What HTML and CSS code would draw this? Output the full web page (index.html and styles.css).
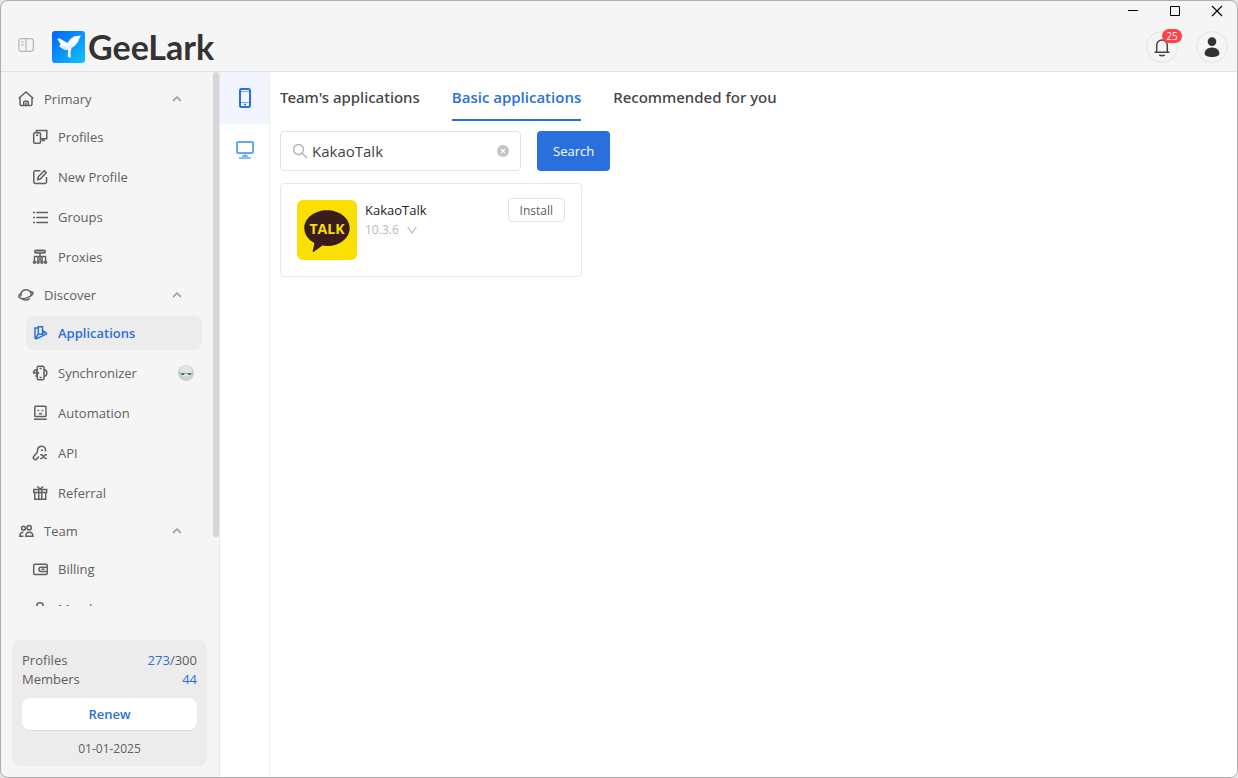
FILE: index.html
```html
<!DOCTYPE html>
<html lang="en">
<head>
<meta charset="utf-8">
<title>GeeLark</title>
<link rel="stylesheet" href="styles.css">
</head>
<body>
<div class="window">
  <header class="header">
    <div class="titlebar">
      <button class="win-btn" aria-label="Minimize"><svg width="12" height="12" viewBox="0 0 12 12"><path d="M1 5.5h10" stroke="#000"/></svg></button>
      <button class="win-btn" aria-label="Maximize"><svg width="12" height="12" viewBox="0 0 12 12"><path d="M1.5 1.5h9v9h-9z" stroke="#000" fill="none"/></svg></button>
      <button class="win-btn" aria-label="Close"><svg width="12" height="12" viewBox="0 0 12 12"><path d="M1 1l10 10M11 1L1 11" stroke="#000" stroke-width="1.1"/></svg></button>
    </div>
    <div class="topbar">
      <button class="collapse" aria-label="Toggle sidebar"><svg width="16" height="16" viewBox="0 0 16 16" fill="none" stroke="#b9b9b9" stroke-width="1.3"><rect x=".8" y="1.7" width="14.6" height="12.6" rx="2.6"/><path d="M8 1.7v12.6M3.2 5h2.2M3.2 8h2.2"/></svg></button>
      <div class="brand">
        <svg width="33" height="32" viewBox="0 0 33 32"><defs><linearGradient id="logo-bg" x1="0" y1="0" x2="1" y2="1"><stop offset="0" stop-color="#0062ff"/><stop offset="1" stop-color="#12c4ff"/></linearGradient></defs><rect width="33" height="32" rx="3" fill="url(#logo-bg)"/><path d="M5 8.500L7 7l2.500 1.500L15.500 12l3-4L22 5.500l7-1L27.500 7l-1.500 4-3 3.500-3.500 2.500-1 4.500.2 5.500-3-1.500.5-6.500-4.700-.8L7.500 15.500l1-2.500L6 9z" fill="#fff"/><path d="M7.500 15.500l4 2.700 4.700.8-1.200-4.500z" fill="#dcecff"/><path d="M15.500 12l.7 7 3.300-2 3.500-2.500z" fill="#e6f2ff"/></svg>
        <span class="brand-name">GeeLark</span>
      </div>
      <div class="top-actions">
        <button class="round" aria-label="Notifications"><svg width="18" height="20" viewBox="0 0 18 20" fill="none" stroke="#444" stroke-width="1.5"><path d="M3.700 15V8.200a5.300 5.300 0 0 1 10.600 0V15M1.500 15.200h15M6.300 18q2.700 1.400 5.400 0"/></svg><span class="badge">25</span></button>
        <button class="round" aria-label="Account"><svg width="18" height="20" viewBox="0 0 18 20" fill="#333"><circle cx="9" cy="4.600" r="4.300"/><path d="M9 10.500c4.500 0 7.400 2.800 7.400 6 0 2.200-3 3.500-7.400 3.500s-7.400-1.300-7.400-3.500c0-3.200 2.900-6 7.400-6z"/></svg></button>
      </div>
    </div>
  </header>
  <div class="body">
    <aside class="sidebar">
      <nav class="nav">
        <button class="group"><svg class="ico" viewBox="0 0 16 16"><path d="M2 6.300L8 1l6 5.300v6.700a1.500 1.500 0 0 1-1.500 1.500h-9A1.500 1.500 0 0 1 2 13zM.8 7.400L2 6.300M15.200 7.400L14 6.300M5.700 14.500v-3.300a1 1 0 0 1 1-1h2.600a1 1 0 0 1 1 1v3.300M8 11.500v3"/></svg><span>Primary</span><svg class="chev" viewBox="0 0 10 8"><path d="M1 6l4-4 4 4"/></svg></button>
        <a class="item" href="#"><svg class="ico" viewBox="0 0 16 16"><path d="M4.500 3.500V1.500h10.300v8.300H9M10.500 9.800v1.700h2.500"/><rect x="1.700" y="3.700" width="6.800" height="10.600" rx="1.200"/><path d="M4 6.200h2.200"/></svg><span>Profiles</span></a>
        <a class="item" href="#"><svg class="ico" viewBox="0 0 16 16"><path d="M8.500 1.800H3.200a1.400 1.400 0 0 0-1.400 1.400v9.900a1.400 1.400 0 0 0 1.400 1.400h9.900a1.400 1.400 0 0 0 1.400-1.400V8M5.800 10.600l.4-2.800 6-6 2 2-6 6.200z"/></svg><span>New Profile</span></a>
        <a class="item" href="#"><svg class="ico" viewBox="0 0 16 16"><path d="M4.300 3.500H16M4.300 8.500H16M4.300 13.500H16M1 3.500h2M1 8.500h2M1 13.500h2"/></svg><span>Groups</span></a>
        <a class="item" href="#"><svg class="ico" viewBox="0 0 16 16"><rect x="2.800" y="1.200" width="10.400" height="2.800" rx="1" fill="#aaa"/><path d="M8 4v8M2.500 12V7.500h11V12M6 7.500V12M10 7.500V12"/><circle cx="2.400" cy="13.200" r="1"/><circle cx="6.100" cy="13.200" r="1"/><circle cx="9.900" cy="13.200" r="1"/><circle cx="13.600" cy="13.200" r="1"/></svg><span>Proxies</span></a>

        <button class="group"><svg class="ico" viewBox="0 0 16 16"><path d="M3 9.500C2 5.500 4.500 2.800 8 2.800s5.800 2.400 5.200 6M4.300 12c2 1.600 5.500 1.500 7.500-.5"/><path d="M3.200 6.200C1.200 7.500.4 9.200 1.200 10.200c1.300 1.700 5.300 1.700 9 .2 3.500-1.400 5.500-3.900 4.700-5-.4-.6-1.400-.8-2.600-.7"/></svg><span>Discover</span><svg class="chev" viewBox="0 0 10 8"><path d="M1 6l4-4 4 4"/></svg></button>
        <a class="item active" href="#" aria-current="page"><svg class="ico" viewBox="0 0 16 16"><path d="M6.300 3H3v9.800a1 1 0 0 0 1.400.9l9.800-4.500a.8.800 0 0 0 0-1.400L10.500 5.500"/><path d="M6.300 1.800h4.200v7.400H6.300zM10.500 9.200l2-2.300M3.500 13.500l2.800-4.300"/></svg><span>Applications</span></a>
        <a class="item" href="#"><svg class="ico" viewBox="0 0 16 16"><rect x="5.200" y="1.200" width="6.800" height="13.600" rx="1.200"/><path d="M7.500 3.500h2.200M7.500 12.500h2.200M5.200 4.700C3 4.700 1.500 6 1.500 8h5M4.500 6l2 2-2 2M3.300 10.800l2 .5M12 11.300c1.900 0 2.800-1.300 2.800-3.300S13.900 4.700 12 4.700"/></svg><span>Synchronizer</span><svg class="bot" viewBox="0 0 16 16"><circle cx="8" cy="8" r="8" fill="#d0d0d0"/><circle cx="8" cy="6" r="5.800" fill="#e2e2e2"/><path d="M1 8.500h14" stroke="#999" stroke-width=".8"/><path d="M3 8.300h3.800l-1 1.700h-2zM9.500 8.300h4l-1 1.700h-2z" fill="#17864a"/></svg></a>
        <a class="item" href="#"><svg class="ico" viewBox="0 0 16 16"><rect x="2.800" y="1.200" width="11.200" height="10.300" rx=".8"/><path d="M2 14.300h12.800M5.500 5.500h1.600M9.700 5.500h1.600M6.800 8.800h3.400"/></svg><span>Automation</span></a>
        <a class="item" href="#"><svg class="ico" viewBox="0 0 16 16"><path d="M13.500 6.500V5a4 4 0 0 0-7.900-.6c-.2 1.500 0 2.500-.7 3.400l-3 3.400a2 2 0 0 0 2.900 2.800l2-2.400M9 5.200h2"/><path d="M9.500 9.500l4 4M13.500 9.500l-4 4M9 9v1.500M14.200 9v1.500M9 14.200V13M14.200 14.200V13"/></svg><span>API</span></a>
        <a class="item" href="#"><svg class="ico" viewBox="0 0 16 16"><path d="M1.800 4.500h12.900v3H1.800zM2.800 7.500v6.800h10.900V7.500M6.700 4.500v9.800M9.800 4.500v9.800M5.200 1.500L8.200 4l3-2.500"/></svg><span>Referral</span></a>

        <button class="group"><svg class="ico" viewBox="0 0 16 16"><circle cx="5.500" cy="5.200" r="1.900"/><circle cx="11.200" cy="4.700" r="2.200"/><path d="M5.500 9.300c-2.400 0-3.700 1.500-3.700 4h3.700M7.800 13.300c0-2.600 1.200-4 3.500-4s3.600 1.400 3.600 4z"/></svg><span>Team</span><svg class="chev" viewBox="0 0 10 8"><path d="M1 6l4-4 4 4"/></svg></button>
        <a class="item" href="#"><svg class="ico" viewBox="0 0 16 16"><rect x="1.700" y="3.200" width="13.500" height="10.300" rx="1"/><path d="M15.200 6.200H9a2.100 2.100 0 0 0 0 4.200h6.200M9.500 8.300h3"/></svg><span>Billing</span></a>
        <a class="item" href="#"><svg class="ico" viewBox="0 0 16 16"><circle cx="8" cy="5" r="3.200"/><path d="M2 14.500c0-3.500 2.500-5 6-5s6 1.500 6 5"/></svg><span>Members</span></a>
      </nav>
      <div class="thumb"></div>
      <section class="quota">
        <div class="quota-row"><span>Profiles</span><span><b>273</b>/300</span></div>
        <div class="quota-row"><span>Members</span><span><b>44</b></span></div>
        <button class="renew">Renew</button>
        <div class="date">01-01-2025</div>
      </section>
    </aside>
    <div class="rail">
      <button class="rail-btn on" aria-label="Cloud phone"><svg width="12" height="20" viewBox="0 0 12 20"><path d="M1 2.500A1.500 1.500 0 0 1 2.500 1h7A1.500 1.500 0 0 1 11 2.500v15A1.500 1.500 0 0 1 9.500 19h-7A1.500 1.500 0 0 1 1 17.500z" fill="none" stroke="#2a70dc" stroke-width="2"/><path d="M2 3.500h8M2 14.500h8" stroke="#7fabee"/><path d="M5 16.500h2" stroke="#2a70dc" stroke-width="1.500"/></svg></button>
      <button class="rail-btn" aria-label="Browser"><svg width="18" height="18" viewBox="0 0 18 18" fill="none" stroke="#5fa8fa" stroke-width="2"><rect x="1" y="1" width="16" height="11" rx="1"/><path d="M9 12v4M3 17h12M6 15h6" stroke-width="1.500"/></svg></button>
    </div>
    <main class="main">
      <div class="tabs" role="tablist">
        <button class="tab" role="tab">Team's applications</button>
        <button class="tab current" role="tab" aria-selected="true">Basic applications</button>
        <button class="tab" role="tab">Recommended for you</button>
      </div>
      <form class="search">
        <label class="field">
          <svg width="16" height="16" viewBox="0 0 16 16" fill="none" stroke="#b0b0b0" stroke-width="1.300"><circle cx="6.500" cy="6.500" r="5"/><path d="M10.200 10.200l4.800 4.800"/></svg>
          <input type="text" value="KakaoTalk" aria-label="Search applications">
          <button class="clear" type="button" aria-label="Clear"><svg width="12" height="12" viewBox="0 0 12 12"><circle cx="6" cy="6" r="6" fill="#c4c4c4"/><path d="M4 4l4 4M8 4L4 8" stroke="#fff" stroke-width="1.100"/></svg></button>
        </label>
        <button class="primary" type="button">Search</button>
      </form>
      <div class="cards">
        <article class="card">
          <svg class="app-icon" width="60" height="60" viewBox="0 0 60 60"><rect width="60" height="60" rx="6" fill="#f9e000"/><path d="M30 10.300c12.600 0 22.700 8 22.700 17.900S42.600 46 30 46c-1.600 0-3.100-.1-4.600-.4L16.500 52c-.6.300-1 0-.8-.7l1.700-8.300C11.300 39.800 7.300 34.400 7.300 28.200c0-9.900 10.100-17.900 22.700-17.900z" fill="#3b1c1c"/><text x="30" y="34" text-anchor="middle" class="talk">TALK</text></svg>
          <div class="info">
            <div class="name">KakaoTalk</div>
            <button class="version">10.3.6 <svg width="10" height="8" viewBox="0 0 10 8"><path d="M.7 1L5 7l4.300-6" fill="none" stroke="#b8b8b8" stroke-width="1.100"/></svg></button>
          </div>
          <button class="install">Install</button>
        </article>
      </div>
    </main>
  </div>
</div>
</body>
</html>
```
FILE: styles.css
```css
* { box-sizing: border-box; }
html { height: 100%; background: #e4e4e4; }
body { margin: 0; height: 100%; font-family: "Open Sans", "Noto Sans", sans-serif; font-size: 13px; line-height: 20px; color: #606060; }
button { font: inherit; color: inherit; background: none; border: 0; padding: 0; }
a { color: inherit; text-decoration: none; }
svg { display: block; flex: none; }

.window { height: 100%; display: flex; flex-direction: column; background: #f5f5f5; border: 1px solid #adadad; border-radius: 8px; overflow: hidden; }

.header { border-bottom: 1px solid #e2e2e2; }
.titlebar { display: flex; justify-content: flex-end; gap: 30px; height: 20px; align-items: center; padding-right: 14px; }
.topbar { display: flex; align-items: center; height: 50px; padding: 0 9px 0 17px; }
.brand { display: flex; align-items: center; gap: 3px; margin-left: 18px; padding-top: 2px; }
.collapse { padding-bottom: 2px; }
.brand-name { font-family: Lato, sans-serif; font-weight: 700; font-size: 34px; line-height: 32px; color: #333; }
.top-actions { display: flex; gap: 18px; margin-left: auto; padding-top: 2px; }
.round { position: relative; width: 32px; height: 32px; border: 1px solid #e4e4e4; border-radius: 50%; display: flex; align-items: center; justify-content: center; }
.badge { position: absolute; top: -3px; right: -5px; min-width: 20px; height: 14px; border-radius: 7px; background: #ff4249; color: #fff; font-size: 10px; line-height: 14px; text-align: center; }

.body { flex: 1; min-height: 0; display: flex; }
.sidebar { position: relative; width: 219px; flex: none; display: flex; flex-direction: column; gap: 34px; padding: 0 12px 11px 11px; border-right: 1px solid #e6e6e6; }
.nav { flex: 1; min-height: 0; overflow: hidden; display: flex; flex-direction: column; padding: 6px 5px 0 6px; }
.group { flex: none; height: 42px; display: flex; align-items: center; gap: 10px; padding: 0 20px 0 0; text-align: left; }
.item { flex: none; height: 34px; display: flex; align-items: center; gap: 10px; margin-left: 8px; padding: 0 8px 0 6px; border-radius: 8px; }
.item + .item { margin-top: 6px; }
.active { background: #ececec; color: #2a70dc; font-weight: 600; }
.ico { width: 16px; height: 16px; fill: none; stroke: currentColor; stroke-width: 1.5; }
.chev { width: 10px; height: 8px; margin-left: auto; fill: none; stroke: #a8a8a8; stroke-width: 1.8; }
.bot { width: 16px; height: 16px; margin-left: auto; }
.thumb { position: absolute; right: 0; top: 0; width: 6px; height: 66%; border-radius: 3px; background: #d6d6d6; }

.quota { background: #ececec; border-radius: 8px; padding: 11px 10px 7px; }
.quota-row { display: flex; justify-content: space-between; line-height: 19px; }
.quota-row b { color: #2a70dc; font-weight: 400; }
.renew { width: 100%; height: 32px; margin-top: 9px; border-radius: 8px; background: #fff; color: #2a70dc; font-weight: 600; box-shadow: 0 1px 1px #0000000d; }
.date { margin-top: 9px; text-align: center; font-size: 12px; }

.rail { width: 50px; flex: none; background: #fff; border-right: 1px solid #eee; }
.rail-btn { width: 100%; height: 52px; display: flex; align-items: center; justify-content: center; }
.on { background: #f2f5ff; }

.main { flex: 1; min-width: 0; background: #fff; padding: 0 10px; }
.tabs { display: flex; gap: 32px; font-family: "Noto Sans", sans-serif; font-size: 15px; color: #444; }
.tab { height: 49px; padding: 2px 0 0; font-weight: 500; border-bottom: 2px solid transparent; }
.current { color: #2a70dc; font-family: "Open Sans", sans-serif; font-weight: 600; border-color: #2a70dc; }
.search { display: flex; gap: 16px; margin-top: 10px; }
.field { width: 241px; height: 40px; display: flex; align-items: center; gap: 4px; padding: 0 11px; border: 1px solid #e2e2e2; border-radius: 4px; }
.field input { flex: 1; min-width: 0; border: 0; padding: 0; outline: 0; background: none; font: inherit; font-size: 15px; color: #444; }
.primary { height: 40px; padding: 0 16px; border-radius: 4px; background: #2a70dc; color: #fff; }
.cards { display: grid; grid-template-columns: repeat(auto-fill, 302px); gap: 12px; margin-top: 12px; }
.card { display: flex; align-items: flex-start; gap: 8px; padding: 16px; border: 1px solid #e8e8e8; border-radius: 4px; }
.talk { font-family: "Open Sans", sans-serif; font-size: 14px; font-weight: 700; fill: #f9e000; }
.info { flex: 1; }
.name { color: #222; }
.version { display: flex; align-items: center; gap: 8px; font-size: 12px; color: #b8b8b8; }
.install { height: 24px; margin-top: -2px; padding: 1px 11px 0; border: 1px solid #e2e2e2; border-radius: 4px; font-size: 12px; line-height: 20px; }
```
